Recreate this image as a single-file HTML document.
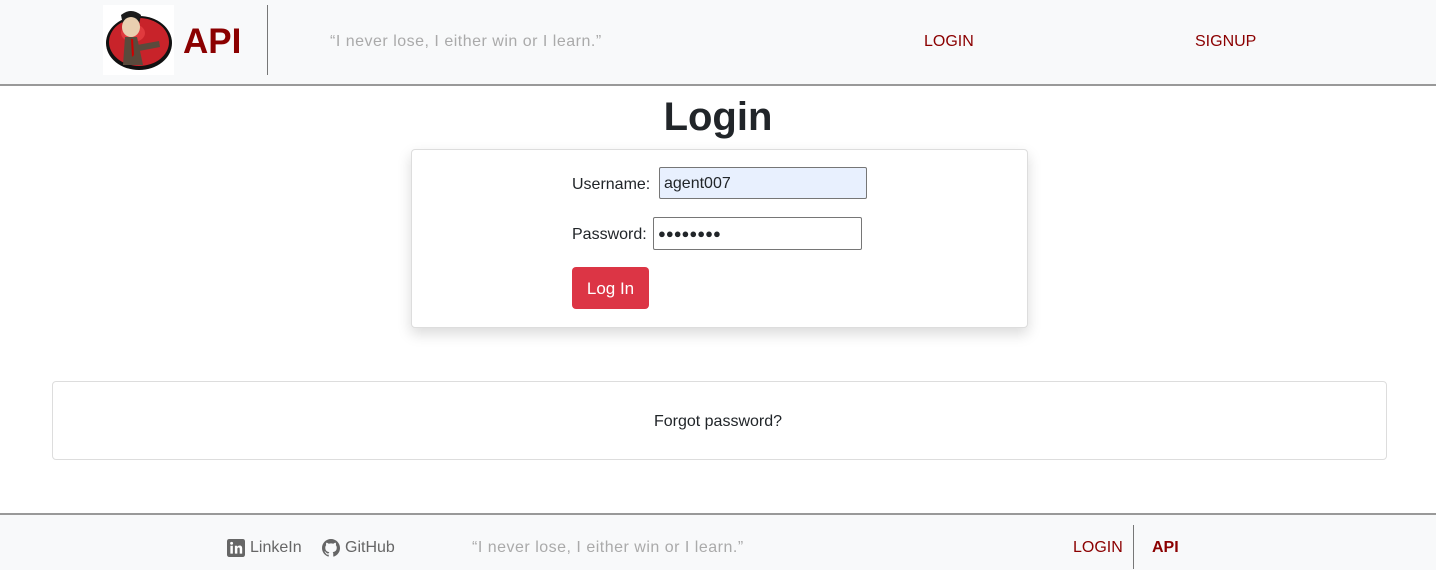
<!DOCTYPE html>
<html><head><meta charset="utf-8"><style>
*{box-sizing:border-box;margin:0;padding:0}
body{width:1436px;height:570px;overflow:hidden;background:#fff;font-family:"Liberation Sans",sans-serif;font-size:16px;color:#212529;position:relative}
.abs{position:absolute;white-space:nowrap}
header{position:absolute;left:0;top:0;width:1436px;height:86px;background:#f8f9fa;border-bottom:2px solid #999}
footer{position:absolute;left:0;top:513px;width:1436px;height:57px;background:#f8f9fa;border-top:2px solid #999}
.red{color:#8b0000}
.q{color:#aaa;letter-spacing:0.5px}
</style></head><body>
<header>
 <div class="abs" style="left:103px;top:5px;width:71px;height:70px;background:#fff">
  <svg width="71" height="70" viewBox="0 0 71 70">
   <ellipse cx="36" cy="38" rx="33" ry="27" fill="#111"/>
   <ellipse cx="36" cy="37" rx="30" ry="24" fill="#c8232a"/>
   <ellipse cx="30" cy="28" rx="12" ry="9" fill="#e03a3e"/>
   <path d="M18 10 Q28 2 38 10 L36 20 L20 20Z" fill="#1b1b1b"/>
   <ellipse cx="28" cy="22" rx="9" ry="10" fill="#e9cfb0"/>
   <path d="M22 32 L34 32 L40 60 L20 60Z" fill="#5a4a3c"/>
   <path d="M34 40 L56 36 L57 42 L36 46Z" fill="#5a4a3c"/>
   <path d="M28 34 L30 34 L31 50 L29 52Z" fill="#c00"/>
  </svg>
 </div>
 <div class="abs red" style="left:183px;top:21px;font-size:35px;font-weight:bold;line-height:42px">API</div>
 <div class="abs" style="left:267px;top:5px;width:1px;height:70px;background:#777"></div>
 <div class="abs q" style="left:330px;top:32px;line-height:20px">“I never lose, I either win or I learn.”</div>
 <div class="abs red" style="left:924px;top:32px;line-height:20px">LOGIN</div>
 <div class="abs red" style="left:1195px;top:32px;line-height:20px">SIGNUP</div>
</header>
<div class="abs" style="left:0;width:1436px;text-align:center;top:93px;font-size:40px;font-weight:bold;line-height:48px">Login</div>
<div class="abs" style="left:411px;top:149px;width:617px;height:179px;border:1px solid #ddd;border-radius:4px;box-shadow:0 6px 14px rgba(0,0,0,.15);background:#fff"></div>
<div class="abs" style="left:572px;top:175px;line-height:20px">Username:</div>
<div class="abs" style="left:659px;top:167px;width:208px;height:32px;background:#e8f0fe;border:1px solid #767676;border-radius:2px;padding:6px 4px;line-height:20px">agent007</div>
<div class="abs" style="left:572px;top:225px;line-height:20px">Password:</div>
<div class="abs" style="left:653px;top:217px;width:209px;height:33px;background:#fff;border:1px solid #767676;border-radius:2px;padding:6px 4px;line-height:20px;font-size:13px">●●●●●●●●</div>
<div class="abs" style="left:572px;top:267px;width:77px;height:42px;background:#dc3545;border-radius:4px;color:#fff;text-align:center;line-height:44px;font-size:17px">Log In</div>
<div class="abs" style="left:52px;top:381px;width:1335px;height:79px;border:1px solid #ddd;border-radius:4px"></div>
<div class="abs" style="left:0;width:1436px;text-align:center;top:412px;line-height:20px">Forgot password?</div>
<footer>
 <svg class="abs" style="left:227px;top:24px" width="18" height="18" viewBox="0 0 16 16"><rect width="16" height="16" rx="2" fill="#666"/><rect x="3" y="6" width="2.2" height="7" fill="#fff"/><circle cx="4.1" cy="3.8" r="1.3" fill="#fff"/><path d="M7 6h2v1c.5-.8 1.3-1.2 2.3-1.2 1.6 0 2.2 1 2.2 2.8V13h-2.2V9c0-.9-.3-1.4-1-1.4S9.2 8.1 9.2 9v4H7z" fill="#fff"/></svg>
 <div class="abs" style="left:250px;top:23px;color:#666;line-height:20px">LinkeIn</div>
 <svg class="abs" style="left:322px;top:24px" width="18" height="18" viewBox="0 0 16 16"><path fill="#666" d="M8 0C3.58 0 0 3.58 0 8c0 3.54 2.290 6.53 5.47 7.59.4.07.55-.17.55-.38v-1.33c-2.23.48-2.7-1.07-2.7-1.07-.36-.92-.89-1.170-.89-1.17-.73-.5.05-.49.05-.49.8.06 1.23.83 1.23.83.72 1.22 1.87.87 2.33.66.07-.52.28-.87.51-1.07-1.78-.2-3.64-.89-3.64-3.95 0-.87.31-1.59.82-2.15-.08-.2-.36-1.02.08-2.12 0 0 .67-.21 2.2.82a7.6 7.6 0 0 1 4 0c1.53-1.04 2.2-.82 2.2-.82.44 1.1.16 1.92.08 2.12.51.56.82 1.27.82 2.15 0 3.07-1.87 3.75-3.65 3.95.29.25.54.73.54 1.48v2.2c0 .21.15.46.55.38A8.01 8.01 0 0 0 16 8c0-4.42-3.58-8-8-8z"/></svg>
 <div class="abs" style="left:345px;top:23px;color:#666;line-height:20px">GitHub</div>
 <div class="abs q" style="left:472px;top:23px;line-height:20px">“I never lose, I either win or I learn.”</div>
 <div class="abs red" style="left:1073px;top:23px;line-height:20px">LOGIN</div>
 <div class="abs" style="left:1133px;top:10px;width:1px;height:44px;background:#777"></div>
 <div class="abs red" style="left:1152px;top:23px;line-height:20px;font-weight:bold">API</div>
</footer>
</body></html>
